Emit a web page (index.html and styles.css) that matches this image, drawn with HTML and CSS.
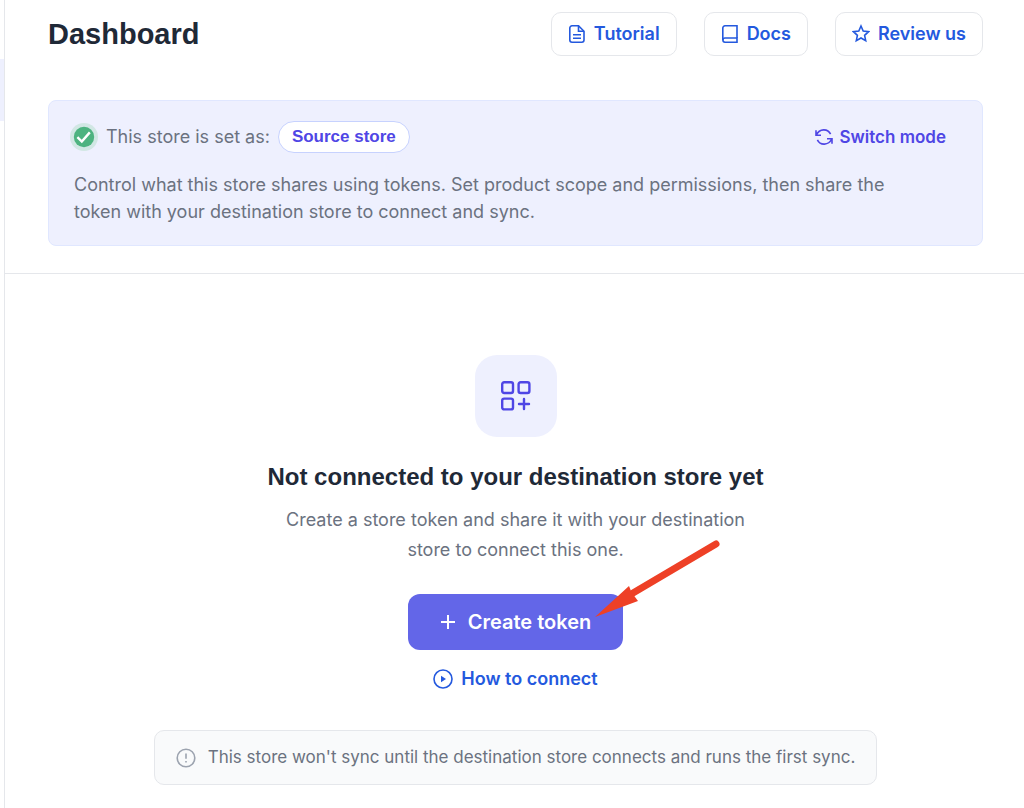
FILE: index.html
```html
<!DOCTYPE html>
<html lang="en">
  <head>
    <meta charset="UTF-8" />
    <meta name="viewport" content="width=device-width, initial-scale=1.0" />
    <title>Dashboard</title>
    <link rel="stylesheet" href="styles.css">
  </head>
  <body>
    <div class="layout">
      <aside class="sidebar">
        <div class="sidebar-active"></div>
      </aside>

      <main class="main">
        <section class="top">
          <header class="header">
            <h1>Dashboard</h1>
            <nav class="actions">
              <a class="action" href="#tutorial">
                <svg width="18" height="20" viewBox="0 0 18 20">
                  <path d="M4 1.8h6.5L16 7.3V16a2.2 2.2 0 0 1-2.2 2.2H4A2.2 2.2 0 0 1 1.8 16V4A2.2 2.2 0 0 1 4 1.8z" />
                  <path d="M10.5 1.8v5.5H16M5 10.8h8M5 14.3h8" />
                </svg>
                Tutorial
              </a>
              <a class="action" href="#docs">
                <svg width="18" height="20" viewBox="0 0 18 20">
                  <path d="M16 14V1.8H4A2.2 2.2 0 0 0 1.8 4v12" />
                  <path d="M16 14v4.2H4A2.1 2.1 0 0 1 4 14z" />
                </svg>
                Docs
              </a>
              <a class="action" href="#review">
                <svg width="18" height="20" viewBox="0 0 18 20">
                  <path d="M9 2l2.2 5 5.4.6-4 3.7 1.1 5.4L9 14l-4.7 2.7 1.1-5.4-4-3.7L6.8 7z" />
                </svg>
                Review us
              </a>
            </nav>
          </header>

          <div class="banner">
            <div class="banner-row">
              <svg class="check" width="28" height="28" viewBox="0 0 28 28">
                <circle cx="14" cy="14" r="14" fill="#d1e7e4" />
                <circle cx="14" cy="14" r="10.2" fill="#4db380" />
                <path d="M7.4 14.2l4.4 4.4 8-9.2" fill="none" stroke="#fff" stroke-width="2.4" />
              </svg>
              <span>This store is set as:</span>
              <strong class="pill">Source store</strong>
              <button class="switch" type="button">
                <svg width="18" height="18" viewBox="0 0 18 18">
                  <path d="M1 2.2v5h5M1.3 7C4.5.4 12.8.3 15.6 6.2M17 15.8v-5h-5M16.7 11C13.5 17.6 5.2 17.7 2.4 11.8" />
                </svg>
                Switch mode
              </button>
            </div>
            <p>
              Control what this store shares using tokens. Set product scope and
              permissions, then share the token with your destination store to
              connect and sync.
            </p>
          </div>
        </section>

        <section class="empty">
          <div class="empty-icon">
            <svg width="32" height="32" viewBox="0 0 32 32">
              <rect x="2.2" y="2.2" width="10.8" height="10.8" rx="2" />
              <rect x="18.6" y="2.2" width="10.8" height="10.8" rx="2" />
              <rect x="2.2" y="18.6" width="10.8" height="10.8" rx="2" />
              <path d="M24 19v10M19 24h10" />
            </svg>
          </div>
          <h2>Not connected to your destination store yet</h2>
          <p>
            Create a store token and share it with your destination store to
            connect this one.
          </p>

          <div class="cta">
            <button class="create" type="button">
              <svg width="16" height="16" viewBox="0 0 16 16">
                <path d="M8 1v14M1 8h14" />
              </svg>
              Create token
            </button>
            <svg class="arrow" width="126" height="78" viewBox="0 0 126 78">
              <path d="M121 4L38 53" />
              <polygon points="0,77 34,46 36,51 40,57 43,61" />
            </svg>
          </div>

          <a class="how" href="#connect">
            <svg width="20" height="20" viewBox="0 0 20 20">
              <circle cx="10" cy="10" r="9" />
              <path d="M8 6.8v6.4l5-3.2z" />
            </svg>
            How to connect
          </a>

          <div class="note">
            <svg width="20" height="20" viewBox="0 0 20 20">
              <circle cx="10" cy="10" r="8.8" />
              <path d="M10 5.5v5.2M10 13v1.6" />
            </svg>
            This store won't sync until the destination store connects and runs the first sync.
          </div>
        </section>
      </main>
    </div>
  </body>
</html>
```
FILE: styles.css
```css
* {
  box-sizing: border-box;
}

body {
  margin: 0;
  font-family: Inter, "Liberation Sans", sans-serif;
  font-size: 18px;
  line-height: 27px;
  color: #6b7280;
  background: #fff;
}

h1,
h2,
p {
  margin: 0;
}

h1,
h2 {
  font-family: "Liberation Sans", Arial, sans-serif;
  font-weight: 700;
  color: #1f2937;
}

a {
  text-decoration: none;
}

button {
  border: 0;
  font: inherit;
  cursor: pointer;
}

svg {
  flex-shrink: 0;
  fill: none;
  stroke: currentColor;
  stroke-width: 1.6;
}

.layout {
  display: flex;
  min-height: 100vh;
}

.sidebar {
  width: 5px;
  flex-shrink: 0;
  padding-top: 59px;
  border-right: 1px solid #e5e7eb;
}

.sidebar-active {
  height: 62px;
  background: #eef0fe;
}

.main {
  flex: 1;
}

.top {
  padding: 12px 41px 27px 43px;
  border-bottom: 1px solid #e5e7eb;
}

.header {
  display: flex;
  justify-content: space-between;
  align-items: center;
  margin-bottom: 44px;

  h1 {
    font-size: 29px;
    line-height: 44px;
  }
}

.actions {
  display: flex;
  gap: 27px;
}

.action {
  display: flex;
  align-items: center;
  gap: 8px;
  height: 44px;
  padding: 0 16px;
  border: 1px solid #e5e7eb;
  border-radius: 10px;
  font-weight: 600;
  line-height: 26px;
  color: #2459de;
}

.banner {
  padding: 20px 36px 20px 25px;
  background: #eef0fe;
  border: 1px solid #e0e7ff;
  border-radius: 8px;

  p {
    max-width: 830px;
    margin-top: 18px;
  }
}

.banner-row {
  display: flex;
  align-items: center;
  gap: 8px;
  line-height: 26px;
}

.check {
  margin-left: -4px;
  stroke: none;
}

.pill {
  padding: 2px 13px;
  background: #fff;
  border: 1px solid #c7d2fe;
  border-radius: 999px;
  font-family: "Liberation Sans", Arial, sans-serif;
  font-size: 17px;
  color: #4f46e5;
}

.switch {
  display: flex;
  align-items: center;
  gap: 6px;
  margin-left: auto;
  padding: 0;
  background: none;
  font-size: 17px;
  font-weight: 600;
  color: #4f46e5;
}

.empty {
  display: flex;
  flex-direction: column;
  align-items: center;
  padding: 81px 41px 22px 43px;

  h2 {
    margin-top: 24px;
    font-size: 24px;
    line-height: 32px;
  }

  p {
    max-width: 500px;
    margin-top: 12px;
    line-height: 30px;
    text-align: center;
  }
}

.empty-icon {
  display: grid;
  place-content: center;
  width: 82px;
  height: 82px;
  background: #eef0fe;
  border-radius: 22px;
  color: #4f46e5;

  svg {
    stroke-width: 2.4;
    stroke-linecap: round;
  }
}

.cta {
  position: relative;
  margin-top: 29px;
}

.create {
  display: flex;
  align-items: center;
  gap: 12px;
  height: 56px;
  padding: 0 32px;
  background: #6366e8;
  border-radius: 12px;
  font-size: 20px;
  font-weight: 600;
  color: #fff;

  svg {
    stroke-width: 2;
  }
}

/* lies over the button, pointing at its label */
.arrow {
  position: absolute;
  top: -54px;
  right: -98px;
  pointer-events: none;

  path {
    stroke: #ee4026;
    stroke-width: 7;
    stroke-linecap: round;
  }

  polygon {
    fill: #ee4026;
    stroke: none;
  }
}

.how {
  display: flex;
  align-items: center;
  gap: 8px;
  margin-top: 15px;
  font-weight: 600;
  color: #2459de;

  path {
    fill: currentColor;
    stroke: none;
  }
}

.note {
  display: flex;
  align-items: center;
  gap: 12px;
  margin-top: 38px;
  padding: 13px 21px;
  background: #f9fafb;
  border: 1px solid #e5e7eb;
  border-radius: 10px;
  font-size: 17px;

  svg {
    color: #9ca3af;
  }
}
```
